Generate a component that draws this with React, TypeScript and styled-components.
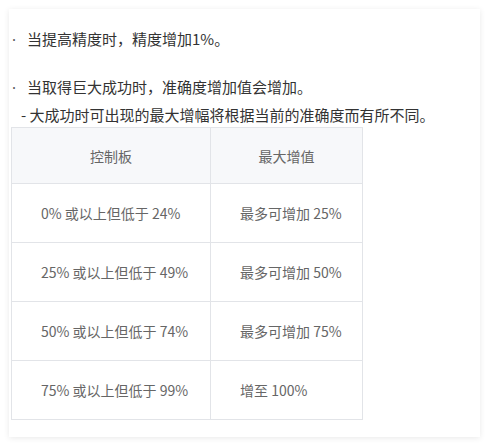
import React from 'react';
import styled, { createGlobalStyle } from 'styled-components';

const GlobalStyle = createGlobalStyle`
	html, body {
		margin: 0;
		padding: 0;
		background: #ffffff;
	}
	body {
		font-family: 'Noto Sans CJK SC', 'Noto Sans', sans-serif;
	}
`;

type Row = { range: string; gain: string };

const rows: Row[] = [
	{ range: '0% 或以上但低于 24%', gain: '最多可增加 25%' },
	{ range: '25% 或以上但低于 49%', gain: '最多可增加 50%' },
	{ range: '50% 或以上但低于 74%', gain: '最多可增加 75%' },
	{ range: '75% 或以上但低于 99%', gain: '增至 100%' },
];

const App = (): JSX.Element => {
	return (
		<>
			<GlobalStyle />
			<StyledPage>
				<StyledCard>
					<StyledLine>
						<StyledDot>·</StyledDot>当提高精度时，精度增加1%。
					</StyledLine>
					<StyledLine />
					<StyledLine>
						<StyledDot>·</StyledDot>当取得巨大成功时，准确度增加值会增加。
					</StyledLine>
					<StyledSubLine>- 大成功时可出现的最大增幅将根据当前的准确度而有所不同。</StyledSubLine>
					<StyledTable>
						<thead>
							<tr>
								<StyledHead $first>控制板</StyledHead>
								<StyledHead>最大增值</StyledHead>
							</tr>
						</thead>
						<tbody>
							{rows.map(row => (
								<tr key={row.range}>
									<StyledCell>{row.range}</StyledCell>
									<StyledCell>{row.gain}</StyledCell>
								</tr>
							))}
						</tbody>
					</StyledTable>
				</StyledCard>
			</StyledPage>
		</>
	);
};

export default App;

const StyledPage = styled.div`
	padding: 9px;
`;

const StyledCard = styled.div`
	width: 471px;
	height: 428px;
	box-sizing: border-box;
	padding: 18px 2px 16px 2px;
	background: #ffffff;
	box-shadow: 0 1px 6px rgba(0, 0, 0, 0.09);
	color: #333333;
`;

const StyledLine = styled.div`
	height: 24px;
	line-height: 24px;
	font-size: 15px;
	white-space: nowrap;
`;

const StyledDot = styled.span`
	display: inline-block;
	width: 16px;
	padding-left: 1px;
	box-sizing: border-box;
	font-family: 'Noto Sans', 'DejaVu Sans', sans-serif;
	color: #555555;
`;

const StyledSubLine = styled(StyledLine)`
	margin-top: 4px;
	padding-left: 10px;
`;

const StyledTable = styled.table`
	border-collapse: collapse;
	width: 352px;
	table-layout: fixed;
	font-size: 14px;
	color: #666666;
`;

const StyledHead = styled.th<{ $first?: boolean }>`
	width: ${p => (p.$first ? '198px' : 'auto')};
	height: 55px;
	padding: 0;
	font-weight: 400;
	text-align: center;
	background: #f7f8fa;
	border: 1px solid #e2e4e8;
`;

const StyledCell = styled.td`
	height: 58px;
	padding: 0 0 0 29px;
	text-align: left;
	border: 1px solid #e2e4e8;
	white-space: nowrap;
`;
